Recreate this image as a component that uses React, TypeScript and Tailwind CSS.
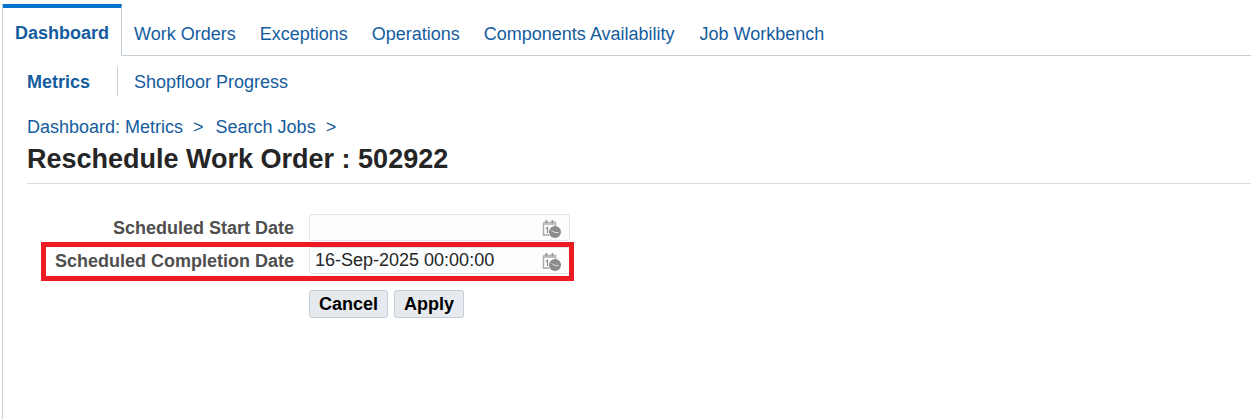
const linkTabs = ['Work Orders', 'Exceptions', 'Operations', 'Components Availability'];

function CalendarClock() {
  return (
    <svg width="20" height="20" viewBox="0 0 20 20" className="mt-[2px] shrink-0">
      <path d="M1.5 3.5h12v5M1.5 3.5v12.5h6" fill="none" stroke="#a8a8a8" strokeWidth="1.4" />
      <rect x="1.5" y="3.5" width="12" height="2.5" fill="#c2c2c2" />
      <rect x="3.5" y="1" width="1.8" height="3.5" fill="#999999" />
      <rect x="9.5" y="1" width="1.8" height="3.5" fill="#999999" />
      <path d="M3.8 9.5l1.7-1v5.5" fill="none" stroke="#8f8f8f" strokeWidth="1.3" />
      <circle cx="13" cy="13" r="6" fill="#8c8c8c" />
      <path d="M9.5 11.5l3.5 2h3.5" fill="none" stroke="#dedede" strokeWidth="1" />
    </svg>
  );
}

function DateRow({ label, value }: { label: string; value?: string }) {
  return (
    <div className="flex h-[27px] items-center">
      <div className="w-[267px] text-right font-bold text-[#4f4f4f]">{label}</div>
      <div className="ml-[15px] flex h-[27px] w-[261px] items-center justify-between rounded-[3px] border border-[#dfe4ea] bg-[#fcfdfe] pl-[5px] pr-[7px]">
        <span className="pb-[2px] text-[#252525]">{value}</span>
        <CalendarClock />
      </div>
    </div>
  );
}

export default function App() {
  return (
    <div className="h-[419px] w-[1251px] overflow-hidden bg-white pl-[2px] pt-[4px] font-['Liberation_Sans',Arial,sans-serif] text-[18px] leading-[22px]">
      <div className="relative h-[415px] border-l border-[#c4ced7]">
        {/* tabs */}
        <div className="flex h-[52px]">
          <div className="flex w-[119px] items-center justify-center border-r border-t-4 border-r-[#c4ced7] border-t-[#0572ce] pt-[2px] font-bold text-[#145c9e]">
            Dashboard
          </div>
          <div className="flex flex-1 items-center border-b border-[#c4ced7] pl-[12px] pt-[10px] pb-[2px] text-[#145c9e]">
            {linkTabs.map((t) => (
              <span key={t} className="mr-[24px]">
                {t}
              </span>
            ))}
            <span className="ml-px">Job Workbench</span>
          </div>
        </div>

        {/* sub tabs */}
        <div className="mt-[11px] flex h-[29px] items-center pl-[24px] text-[#145c9e]">
          <span className="font-bold">Metrics</span>
          <span className="ml-[27px] h-[29px] w-px bg-[#c4ced7]" />
          <span className="ml-[16px]">Shopfloor Progress</span>
        </div>

        {/* breadcrumb + title */}
        <div className="ml-[24px] mt-[20px] flex h-[22px] items-center text-[#145c9e]">
          <span>Dashboard: Metrics</span>
          <span className="ml-[10px]">&gt;</span>
          <span className="ml-[12px]">Search Jobs</span>
          <span className="ml-[10px]">&gt;</span>
        </div>
        <h1 className="ml-[24px] mt-[5px] h-[41px] border-b border-[#d6dfe6] pt-[1px] text-[27px] font-bold leading-[30px] text-[#252525]">
          Reschedule Work Order : 502922
        </h1>

        {/* form */}
        <div className="ml-[24px] mt-[30px] flex flex-col gap-[6px]">
          <DateRow label="Scheduled Start Date" />
          <DateRow label="Scheduled Completion Date" value="16-Sep-2025 00:00:00" />
        </div>
        <div className="ml-[306px] mt-[16px] flex gap-[6px]">
          <button className="h-[28px] w-[79px] rounded-[3px] border border-[#c4ced7] bg-[#e6eaee] font-bold text-black">Cancel</button>
          <button className="h-[28px] w-[70px] rounded-[3px] border border-[#c4ced7] bg-[#e6eaee] font-bold text-black">Apply</button>
        </div>

        {/* annotation box */}
        <div className="absolute left-[38px] top-[238px] h-[39px] w-[533px] border-[5px] border-[#ed1c24]" />
      </div>
    </div>
  );
}
